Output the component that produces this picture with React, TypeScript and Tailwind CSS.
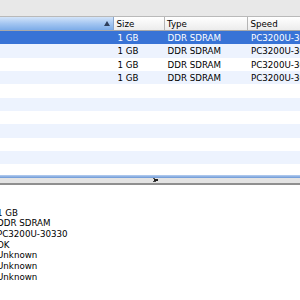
import React from "react";

const rows = [
  { size: "1 GB", type: "DDR SDRAM", speed: "PC3200U-30330" },
  { size: "1 GB", type: "DDR SDRAM", speed: "PC3200U-30330" },
  { size: "1 GB", type: "DDR SDRAM", speed: "PC3200U-30330" },
  { size: "1 GB", type: "DDR SDRAM", speed: "PC3200U-30330" },
];

const details = ["1 GB", "DDR SDRAM", "PC3200U-30330", "OK", "Unknown", "Unknown", "Unknown"];

export default function App() {
  const all = Array.from({ length: 12 }, (_, i) => rows[i] ?? null);
  return (
    <div
      className="w-[300px] h-[300px] overflow-hidden bg-white text-black flex flex-col"
      style={{ fontFamily: '"DejaVu Sans", "Liberation Sans", sans-serif' }}
    >
      <div className="h-[17px] shrink-0 bg-[#e8e8e8] border-b border-[#b9b9b9]" />
      <div className="h-[14px] shrink-0 flex text-[8.7px] leading-[14px] border-b border-[#a9a9a9]">
        <div className="w-[114px] shrink-0 relative bg-gradient-to-b from-[#d3e4f9] via-[#a4c6f1] to-[#7dace8] border-r border-[#8aa6cc]">
          <svg className="absolute left-[104px] top-[4px]" width="6" height="5" viewBox="0 0 6 5">
            <path d="M3 0 L6 5 L0 5 Z" fill="#2e3f5c" />
          </svg>
        </div>
        <div className="w-[51px] shrink-0 pl-[2.5px] bg-gradient-to-b from-[#ffffff] to-[#ececec] border-r border-[#b5b5b5]">Size</div>
        <div className="w-[83px] shrink-0 pl-[2px] bg-gradient-to-b from-[#ffffff] to-[#ececec] border-r border-[#b5b5b5]">Type</div>
        <div className="flex-1 pl-[2.5px] bg-gradient-to-b from-[#ffffff] to-[#ececec] whitespace-nowrap overflow-hidden">Speed</div>
      </div>
      <div className="h-[144px] shrink-0 overflow-hidden flex flex-col">
        {all.map((r, i) => (
          <div
            key={i}
            className={
              "h-[13.33px] shrink-0 flex text-[8.7px] leading-[13.33px] whitespace-nowrap " +
              (i === 0 ? "bg-[#3873d6] text-white" : i % 2 === 1 ? "bg-[#edf3fe]" : "bg-white")
            }
          >
            <div className="w-[114px] shrink-0" />
            <div className="w-[51px] shrink-0 pl-[3.5px] pt-[1px]">{r?.size}</div>
            <div className="w-[83px] shrink-0 pl-[2.5px] pt-[1px]">{r?.type}</div>
            <div className="flex-1 pl-[3px] pt-[1px] overflow-hidden">{r?.speed}</div>
          </div>
        ))}
      </div>
      <div className="h-[3px] shrink-0 bg-gradient-to-b from-[#b8cff0] to-[#6b98d6]" />
      <div className="h-[5px] shrink-0 bg-[#e3e3e3] relative">
        <svg className="absolute left-[152px] top-[0px]" width="7" height="5" viewBox="0 0 7 5">
          <rect x="1" y="0" width="2" height="1" fill="#555" />
          <rect x="2" y="1" width="4" height="2" fill="#1e1e1e" />
          <rect x="1" y="3" width="3" height="1" fill="#444" />
        </svg>
      </div>
      <div className="h-[1.5px] shrink-0 bg-[#8f8f8f]" />
      <div className="pt-[23px] -ml-[3px] text-[8.7px] leading-[10.7px] whitespace-nowrap">
        {details.map((d, i) => (
          <div key={i}>{d}</div>
        ))}
      </div>
    </div>
  );
}
